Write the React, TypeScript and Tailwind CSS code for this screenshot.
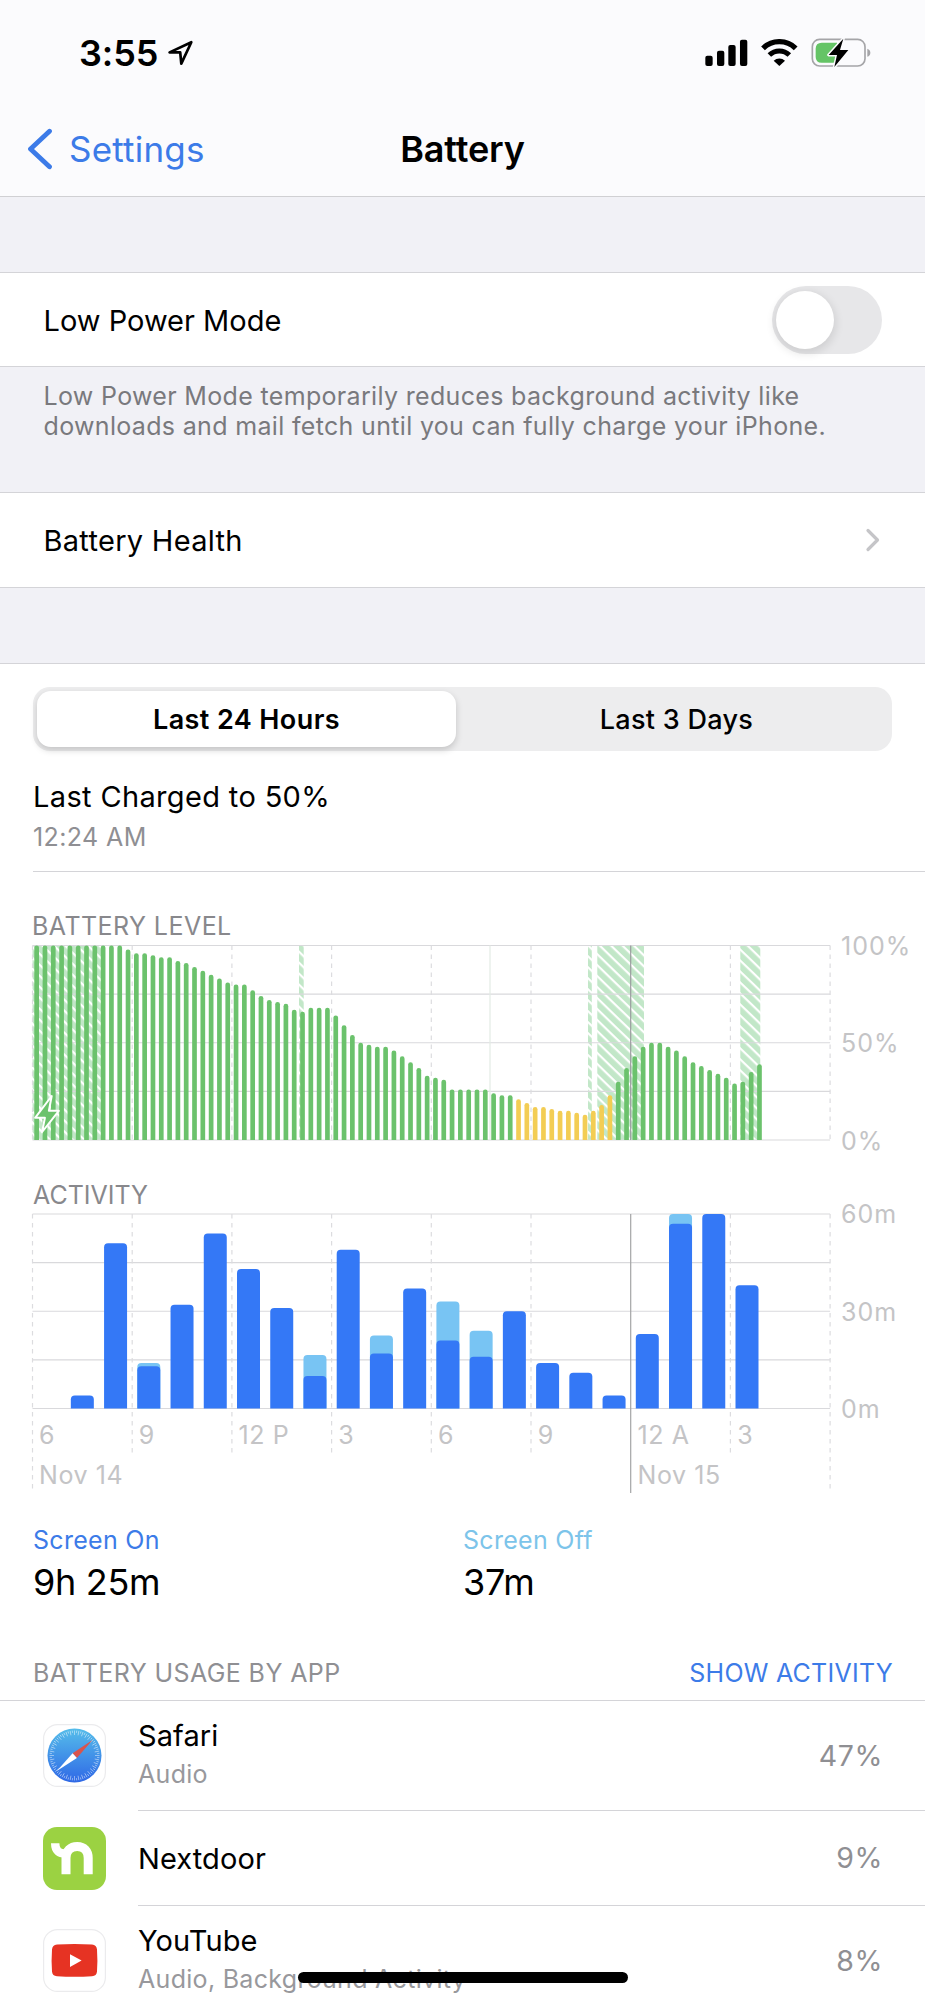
import { useState } from 'react';
import type { ReactNode } from 'react';

const BATTERY_LEVELS = [
  100, 100, 100, 100, 100, 100, 100, 100, 100, 100, 100, 98, 96, 96, 95, 94, 94, 92, 91, 89, 87, 85, 83, 81,
  80, 80, 77, 74, 72, 71, 70, 67, 66, 68, 68, 68, 64, 59, 54, 50, 49, 48, 48, 46, 43, 40, 37, 33,
  32, 31, 26, 26, 26, 26, 26, 24, 23, 23, 21, 19, 17, 17, 16, 15, 15, 14, 13, 15, 18, 23, 30, 37,
  43, 48, 50, 50, 48, 46, 43, 40, 38, 36, 34, 32, 29, 30, 35, 39,
];

// Stretches of time on the charger, in chart pixels
const CHARGING = [
  { x: 0, w: 69 },
  { x: 266.5, w: 4.7 },
  { x: 555.5, w: 3.8 },
  { x: 564.8, w: 46.7 },
  { x: 707.8, w: 20 },
];

// [screen on, total] minutes per hour
const ACTIVITY: [number, number][] = [
  [0, 0], [4, 4], [51, 51], [13, 14], [32, 32], [54, 54], [43, 43], [31, 31], [10, 16.5], [49, 49], [17, 22.5], [37, 37],
  [21, 33], [16, 24], [30, 30], [14, 14], [11, 11], [4, 4], [23, 23], [57, 60], [60, 60], [38, 38],
];

const HOURS = ['6', '9', '12 P', '3', '6', '9', '12 A', '3'];

const CHART_W = 797.6;
const CHART_H = 194.5;
const GRID = [0, 1, 2, 3, 4, 5, 6, 7, 8];

function roundedTop(x: number, y: number, w: number, bottom: number, r: number) {
  return `M${x} ${bottom}V${y + r}q0 ${-r} ${r} ${-r}h${w - 2 * r}q${r} 0 ${r} ${r}V${bottom}Z`;
}

function Rows() {
  return (
    <>
      {[0, 1, 2, 3, 4].map(i => (
        <line key={i} x1="0" x2={CHART_W} y1={(i * CHART_H) / 4} y2={(i * CHART_H) / 4} stroke="#d9d9dc" strokeWidth="1.2" />
      ))}
    </>
  );
}

function BatteryChart() {
  const step = CHART_W / 96;
  return (
    <svg width="800" height="197" viewBox="-0.5 -0.5 800 197" className="block overflow-visible">
      <defs>
        <pattern id="hatch" width="7.9" height="7.9" patternUnits="userSpaceOnUse" patternTransform="rotate(44)">
          <rect width="7.9" height="7.9" fill="#c2e7c8" />
          <rect width="7.9" height="2.2" fill="#fff" />
        </pattern>
      </defs>
      {CHARGING.map(c => (
        <rect key={c.x} x={c.x} y="0" width={c.w} height={CHART_H} fill="url(#hatch)" />
      ))}
      <Rows />
      {GRID.map(i => (
        <line
          key={i}
          x1={(i * CHART_W) / 8}
          x2={(i * CHART_W) / 8}
          y1="0"
          y2={CHART_H}
          stroke={i === 6 ? '#9a9c9e' : '#dcdcdf'}
          strokeWidth="1.2"
          strokeDasharray={i === 6 ? undefined : '4.5 4.5'}
        />
      ))}
      <line x1="457.5" x2="457.5" y1="0" y2={CHART_H} stroke="#e3ebe5" strokeWidth="1.2" />
      {BATTERY_LEVELS.map((level, i) => {
        const h = (level / 100) * CHART_H;
        const low = i >= 58 && i <= 69;
        return <path key={i} d={roundedTop(i * step + 1.8, CHART_H - h, 4.7, CHART_H, 2.3)} fill={low ? '#f3cd54' : '#6bc26c'} />;
      })}
      <path d="M19.2 150.5 L2.6 172.3 H12.4 L9.6 186.5 L26.3 165.3 H16.4 Z" fill="#6bc26c" stroke="#fff" strokeWidth="2" strokeLinejoin="round" />
    </svg>
  );
}

function ActivityChart() {
  const step = CHART_W / 24;
  return (
    <svg width="800" height="280" viewBox="-0.5 0 800 280" className="block overflow-visible">
      <Rows />
      {GRID.map(i => (
        <line
          key={i}
          x1={(i * CHART_W) / 8}
          x2={(i * CHART_W) / 8}
          y1="0"
          y2={i === 0 || i === 6 || i === 8 ? 279 : 243}
          stroke={i === 6 ? '#a3a5a6' : '#dcdcdf'}
          strokeWidth="1.2"
          strokeDasharray={i === 6 ? undefined : '4.5 4.5'}
        />
      ))}
      {ACTIVITY.map(([on, total], i) => {
        const x = i * step + 5.1;
        const y = CHART_H - (on / 60) * CHART_H;
        return (
          <g key={i}>
            {total > on && <path d={roundedTop(x, CHART_H - (total / 60) * CHART_H, 23, CHART_H, 4)} fill="#78c4f3" />}
            {on > 0 && <path d={roundedTop(x, y, 23, CHART_H, 4)} fill="#3478f6" />}
          </g>
        );
      })}
    </svg>
  );
}

function ChartWithAxis({ chart, labels }: { chart: ReactNode; labels: string[] }) {
  return (
    <div className="flex gap-[10px]">
      <div className="w-[799px] shrink-0">{chart}</div>
      <div className="-mt-[12.5px] flex h-[221px] flex-col justify-between text-[25px] leading-[26px] tracking-[1px] text-[#c4c4c6]">
        {labels.map(l => (
          <span key={l}>{l}</span>
        ))}
      </div>
    </div>
  );
}

function StatusBar() {
  return (
    <div className="flex h-[105px] items-center justify-between pl-[79px] pr-[54px]">
      <div className="flex items-center gap-[9px]">
        <span className="text-[36px] font-semibold leading-[44px] tracking-[-0.1px]">3:55</span>
        <svg width="28" height="28" viewBox="0 0 28 28" fill="none" stroke="#000" strokeWidth="2.7" strokeLinejoin="round">
          <path d="M24.3 3.2 L2.6 13.4 H13.2 L14.3 24.6 Z" />
        </svg>
      </div>
      <div className="flex items-center">
        <svg width="42.3" height="28" viewBox="75 55 127 84">
          <rect x="76" y="105" width="22" height="31" rx="6" />
          <rect x="111" y="90" width="22" height="46" rx="6" />
          <rect x="145" y="73" width="22" height="63" rx="6" />
          <rect x="180" y="57" width="22" height="79" rx="6" />
        </svg>
        <svg width="36.7" height="28" viewBox="242 55 110 84" className="ml-[13.4px]" fill="none" stroke="#000">
          <path d="M248 83 A70 70 0 0 1 346 83" strokeWidth="16" />
          <path d="M267 103 A43 43 0 0 1 327 103" strokeWidth="15" />
          <path d="M297 136 L280 120 A25 25 0 0 1 314 120 Z" fill="#000" stroke="none" />
        </svg>
        <svg width="60" height="30" viewBox="392 52 180 90" className="ml-[13.3px]">
          <rect x="396" y="56" width="158" height="80" rx="22" fill="none" stroke="#a5a5a8" strokeWidth="5" />
          <path d="M561 84 Q570 87 570 96 Q570 105 561 108 Z" fill="#a5a5a8" />
          <path d="M424 66 H470 V126 H424 Q406 126 406 108 V84 Q406 66 424 66 Z" fill="#65c466" />
          <path
            d="M489 54 L445 103 H470 L462 139 L504 88 H479 Z"
            fill="#000"
            stroke="#fbfbfd"
            strokeWidth="9"
            strokeLinejoin="round"
            paintOrder="stroke"
          />
        </svg>
      </div>
    </div>
  );
}

function SafariIcon() {
  const ticks = Array.from({ length: 72 }, (_, i) => i);
  return (
    <svg width="63" height="63" viewBox="0 0 63 63">
      <defs>
        <linearGradient id="safari" x1="0" y1="0" x2="0" y2="1">
          <stop offset="0" stopColor="#55bdea" />
          <stop offset="1" stopColor="#2f68e6" />
        </linearGradient>
      </defs>
      <rect x="0.6" y="0.6" width="61.8" height="61.8" rx="14" fill="#fff" stroke="#ebebed" strokeWidth="1.2" />
      <circle cx="31.5" cy="31.5" r="27" fill="url(#safari)" />
      {ticks.map(i => (
        <line
          key={i}
          x1="31.5"
          x2="31.5"
          y1="6.5"
          y2={i % 2 ? 8.8 : 11}
          stroke="#fff"
          strokeWidth="0.6"
          opacity="0.75"
          transform={`rotate(${i * 5} 31.5 31.5)`}
        />
      ))}
      <path d="M49.5 16 L29.6 29.3 L33.9 34 Z" fill="#d9544d" />
      <path d="M13.8 47 L29.6 29.3 L33.9 34 Z" fill="#fff" />
    </svg>
  );
}

function NextdoorIcon() {
  return (
    <svg width="63" height="63" viewBox="0 0 63 63">
      <rect width="63" height="63" rx="14" fill="#9bd242" />
      <path d="M12.2 16.2 C12.2 24 16.2 26.8 23 26.6" fill="none" stroke="#fff" strokeWidth="8.4" />
      <path d="M23 47.3 V31 C23 23.4 27.6 19.4 34.2 19.4 C41 19.4 45.2 23.8 45.2 31 V47.3" fill="none" stroke="#fff" strokeWidth="9" />
    </svg>
  );
}

function YouTubeIcon() {
  return (
    <svg width="63" height="63" viewBox="0 0 63 63">
      <rect x="0.6" y="0.6" width="61.8" height="61.8" rx="14" fill="#fff" stroke="#ebebed" strokeWidth="1.2" />
      <path d="M14 15.6 Q31.5 14.6 49 15.6 Q53.6 16 54 20.5 Q54.8 31.5 54 42.5 Q53.6 47 49 47.2 Q31.5 48.2 14 47.2 Q9.4 47 9 42.5 Q8.2 31.5 9 20.5 Q9.4 16 14 15.6 Z" fill="#e63323" />
      <path d="M27 25.2 V38 L38.6 31.6 Z" fill="#fff" />
    </svg>
  );
}

const APPS = [
  { name: 'Safari', detail: 'Audio', share: '47%', icon: <SafariIcon />, row: 'h-[110px]' },
  { name: 'Nextdoor', detail: '', share: '9%', icon: <NextdoorIcon />, row: 'h-[95px]' },
  { name: 'YouTube', detail: 'Audio, Background Activity', share: '8%', icon: <YouTubeIcon />, row: 'h-[110px]' },
];

export default function App() {
  const [lowPower, setLowPower] = useState(false);
  const [range, setRange] = useState<'day' | 'days'>('day');

  return (
    <div className="relative h-[2000px] w-[925px] overflow-hidden bg-white font-['Inter','Liberation_Sans',sans-serif] text-black">
      {/* Header */}
      <header className="h-[197px] border-b-[1.5px] border-[#d0d0d3] bg-[#fbfbfd]">
        <StatusBar />
        <div className="grid h-[88px] grid-cols-3 items-center">
          <button className="flex items-center gap-4 pl-[27px] text-[#3c7be8]">
            <svg width="26" height="42" viewBox="0 0 26 42" fill="none" stroke="currentColor" strokeWidth="4.8" strokeLinecap="round" strokeLinejoin="round">
              <path d="M22.5 3.2 L3.5 21 L22.5 38.8" />
            </svg>
            <span className="text-[35px] leading-[44px] tracking-[0.2px]">Settings</span>
          </button>
          <h1 className="text-center text-[36px] font-semibold leading-[44px] tracking-[-0.2px]">Battery</h1>
        </div>
      </header>

      <div className="h-[75px] bg-[#f1f1f6]" />

      {/* Low power mode */}
      <div className="flex h-[95px] items-center justify-between border-y-[1.5px] border-[#d4d4d8] pl-[43.5px] pr-[43px]">
        <span className="pt-[2px] text-[29px]">Low Power Mode</span>
        <button
          role="switch"
          aria-checked={lowPower}
          onClick={() => setLowPower(!lowPower)}
          className={`mt-px flex h-[68px] w-[110px] items-center rounded-full px-[4px] ${lowPower ? 'justify-end bg-[#65c466]' : 'bg-[#e7e7e9]'}`}
        >
          <span className="h-[58px] w-[58px] rounded-full bg-white shadow-[0_3px_8px_2px_rgba(0,0,0,0.1)]" />
        </button>
      </div>
      <div className="h-[125px] bg-[#f1f1f6] pl-[43.5px] pt-[14px] text-[25px] leading-[30px] text-[#79797d]">
        <p className="whitespace-nowrap tracking-[0.33px]">Low Power Mode temporarily reduces background activity like</p>
        <p className="whitespace-nowrap tracking-[0.33px]">downloads and mail fetch until you can fully charge your iPhone.</p>
      </div>

      {/* Battery health */}
      <button className="flex h-[96px] w-full items-center justify-between border-y-[1.5px] border-[#d4d4d8] pl-[43.5px] pr-[45px]">
        <span className="pt-[2px] text-[29px] tracking-[0.3px]">Battery Health</span>
        <svg width="15" height="24" viewBox="0 0 15 24" fill="none" stroke="#c5c5c8" strokeWidth="3.2" strokeLinecap="round" strokeLinejoin="round">
          <path d="M3 2.5 L12.5 12 L3 21.5" />
        </svg>
      </button>
      <div className="h-[75px] bg-[#f1f1f6]" />

      {/* Range picker */}
      <section className="border-t-[1.5px] border-[#d4d4d8] pt-[23px]">
        <div className="mx-[33px] flex h-[64px] rounded-[17px] bg-[#ededee] p-1 text-[27px]">
          <button
            onClick={() => setRange('day')}
            className={`w-[419px] rounded-[14px] pt-[2px] tracking-[0.4px] ${range === 'day' ? 'bg-white font-semibold shadow-[0_3px_7px_rgba(0,0,0,0.18)]' : 'font-medium'}`}
          >
            Last 24 Hours
          </button>
          <button
            onClick={() => setRange('days')}
            className={`flex-1 rounded-[14px] pl-[9px] pt-[2px] tracking-[0.3px] ${range === 'days' ? 'bg-white font-semibold shadow-[0_3px_7px_rgba(0,0,0,0.18)]' : 'font-medium'}`}
          >
            Last 3 Days
          </button>
        </div>

        <div className="ml-[33px] h-[121px] border-b-[1.5px] border-[#d4d4d8] pt-[26px]">
          <p className="text-[29px] leading-[40px] tracking-[0.35px]">Last Charged to 50%</p>
          <p className="mt-[3px] text-[25px] leading-[34px] tracking-[0.4px] text-[#8f8f93]">12:24 AM</p>
        </div>
      </section>

      {/* Battery level */}
      <section className="pl-[32px] pt-[39px]">
        <h2 className="h-[34px] text-[25px] leading-[30px] tracking-[0.45px] text-[#88888c]">BATTERY LEVEL</h2>
        <ChartWithAxis chart={<BatteryChart />} labels={['100%', '50%', '0%']} />
      </section>

      {/* Activity */}
      <section className="h-[370px] pl-[32px] pt-[26px]">
        <h2 className="h-[34px] pl-px text-[25px] leading-[30px] text-[#88888c]">ACTIVITY</h2>
        <div className="h-[204px]">
          <ChartWithAxis chart={<ActivityChart />} labels={['60m', '30m', '0m']} />
        </div>
        <div className="grid w-[798px] grid-cols-8 text-[25px] leading-[30px] tracking-[0.6px] text-[#c4c4c6]">
          {HOURS.map((h, i) => (
            <span key={i} className="pl-[7px] pt-[2px]">{h}</span>
          ))}
          <span className="col-span-6 pl-[7px] pt-[10px]">Nov 14</span>
          <span className="col-span-2 pl-[7px] pt-[10px]">Nov 15</span>
        </div>
      </section>

      {/* Totals */}
      <section className="grid h-[125px] grid-cols-[430px_1fr] pl-[33px]">
        <div>
          <p className="text-[25px] leading-[32px] tracking-[0.3px] text-[#3c7be8]">Screen On</p>
          <p className="mt-[3px] text-[36px] leading-[46px] tracking-[-0.3px]">9h 25m</p>
        </div>
        <div>
          <p className="text-[25px] leading-[32px] tracking-[0.3px] text-[#7cc4ea]">Screen Off</p>
          <p className="mt-[3px] text-[36px] leading-[46px] tracking-[-0.3px]">37m</p>
        </div>
      </section>

      {/* Usage by app */}
      <section>
        <div className="flex h-[52px] items-center justify-between border-b-[1.5px] border-[#d4d4d8] pl-[33px] pr-[32px] text-[25px]">
          <h2 className="tracking-[0.4px] text-[#8f8f93]">BATTERY USAGE BY APP</h2>
          <button className="tracking-[0.25px] text-[#3c7be8]">SHOW ACTIVITY</button>
        </div>
        {APPS.map(app => (
          <div key={app.name} className={`flex items-center pl-[43px] ${app.row}`}>
            {app.icon}
            <div className="ml-8 flex h-full flex-1 items-center justify-between border-b-[1.5px] border-[#d4d4d8] pr-[42px]">
              <div className={app.detail ? '' : 'pt-[3px]'}>
                <p className="text-[29px] leading-[38px] tracking-[0.1px]">{app.name}</p>
                {app.detail && <p className="text-[25px] leading-[38px] tracking-[0.3px] text-[#98989c]">{app.detail}</p>}
              </div>
              <span className="pt-[2px] text-[28.5px] tracking-[0.6px] text-[#8f8f93]">{app.share}</span>
            </div>
          </div>
        ))}
      </section>

      {/* Home indicator */}
      <div className="absolute left-[298px] top-[1972px] h-[11px] w-[330px] rounded-full bg-black" />
    </div>
  );
}
